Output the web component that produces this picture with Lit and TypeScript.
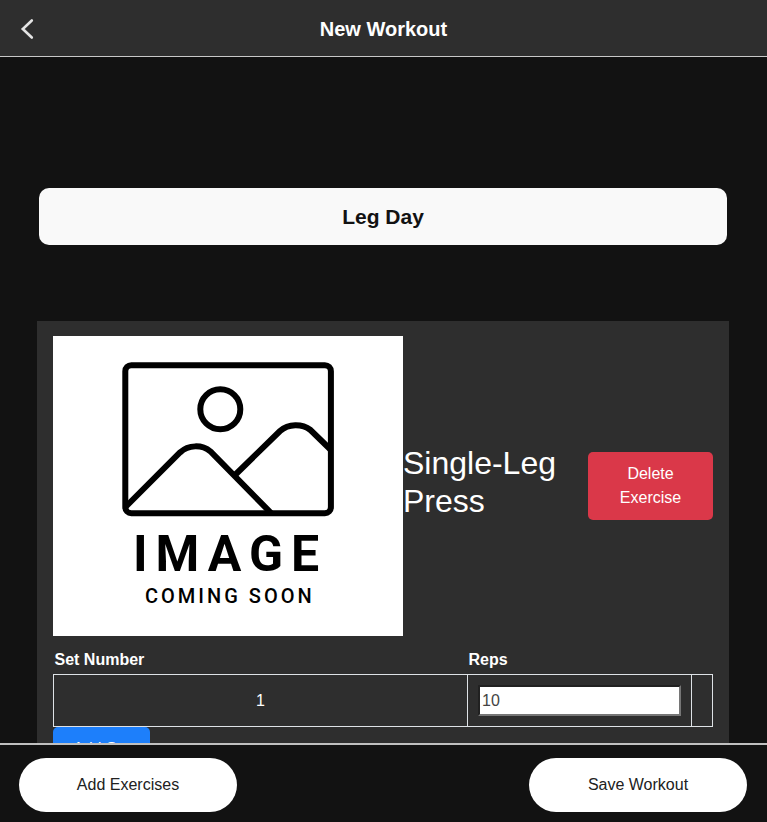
import { LitElement, html, css } from "lit";
import { customElement, state } from "lit/decorators.js";

interface WorkoutSet {
  reps: number;
}

@customElement("image-placeholder")
class ImagePlaceholder extends LitElement {
  static styles = css`
    :host {
      display: block;
      flex: none;
    }
    .art {
      display: block;
      background: #fff;
    }
    .line {
      fill: none;
      stroke: #000;
      stroke-width: 6;
    }
    .caption {
      font-family: Roboto, "Liberation Sans", sans-serif;
      font-weight: 700;
      fill: #000;
    }
    .large {
      font-size: 50px;
      letter-spacing: 8px;
    }
    .small {
      font-size: 20px;
      font-weight: 500;
      letter-spacing: 3px;
    }
  `;

  render() {
    return html`
      <svg class="art" width="350" height="300" viewBox="0 0 350 300" role="img" aria-label="Image coming soon">
        <rect class="line" x="72.3" y="29.2" width="205.6" height="148" rx="6" />
        <circle class="line" cx="167.3" cy="73.2" r="20" />
        <path class="line" d="M73 170.500 L127 116.500 C135.500 108.500 149 108.500 157.500 115.500 L218 177" />
        <path class="line" d="M182.500 138.500 L227 95 C235.500 87.500 249 87.500 257.500 94 L278 114" />
        <text class="caption large" x="80" y="235">IMAGE</text>
        <text class="caption small" x="92" y="267">COMING SOON</text>
      </svg>
    `;
  }
}

@customElement("exercise-card")
class ExerciseCard extends LitElement {
  @state() private sets: WorkoutSet[] = [{ reps: 10 }];

  static styles = css`
    :host {
      display: block;
      padding: 15px 16px;
      background: #2e2e2e;
    }
    .summary {
      display: flex;
      align-items: center;
    }
    .name {
      flex: 1;
      min-width: 0;
      margin: 0 0 8px;
      font-size: 32px;
      font-weight: 400;
      line-height: 38px;
    }
    .btn {
      border: 0;
      border-radius: 5px;
      color: #fff;
      font: inherit;
      line-height: 24px;
      cursor: pointer;
    }
    .delete {
      width: 125px;
      flex: none;
      padding: 10px 24px;
      background: #da3849;
    }
    .add {
      display: block;
      padding: 10px 20px;
      background: #1d7ffb;
    }
    .sets {
      width: 100%;
      margin-top: 11px;
      table-layout: fixed;
      border-collapse: collapse;
    }
    .sets th {
      padding: 1px 1px 2px;
      text-align: left;
      font-weight: 700;
    }
    .sets td {
      height: 31px;
      padding: 10px;
      border: 1px solid #dee2e6;
      text-align: center;
    }
    .reps-col {
      width: 224px;
    }
    .action-col {
      width: 21px;
    }
    .reps {
      display: block;
      box-sizing: border-box;
      width: 100%;
      height: 31px;
      padding: 1px 2px;
      border: 2px inset #767676;
      border-radius: 0;
      background: #fff;
      color: #444;
      font: inherit;
    }
  `;

  private addSet() {
    this.sets = [...this.sets, { reps: 10 }];
  }

  render() {
    return html`
      <div class="summary">
        <image-placeholder></image-placeholder>
        <h2 class="name">Single-Leg Press</h2>
        <button class="btn delete" type="button">Delete Exercise</button>
      </div>
      <table class="sets">
        <colgroup>
          <col />
          <col class="reps-col" />
          <col class="action-col" />
        </colgroup>
        <thead>
          <tr>
            <th scope="col">Set Number</th>
            <th scope="col" id="reps-label">Reps</th>
            <th></th>
          </tr>
        </thead>
        <tbody>
          ${this.sets.map(
            (set, i) => html`
              <tr>
                <td>${i + 1}</td>
                <td>
                  <input class="reps" type="text" inputmode="numeric" aria-labelledby="reps-label" .value=${String(set.reps)} />
                </td>
                <td></td>
              </tr>
            `
          )}
        </tbody>
      </table>
      <button class="btn add" type="button" @click=${this.addSet}>Add Set</button>
    `;
  }
}

@customElement("app-root")
class AppRoot extends LitElement {
  static styles = css`
    :host {
      display: flex;
      flex-direction: column;
      height: 100vh;
      background: #121212;
      color: #fff;
      font-family: "Liberation Sans", Arial, sans-serif;
      font-size: 16px;
      line-height: 24px;
    }
    .header {
      display: grid;
      grid-template-columns: 56px 1fr 56px;
      align-items: center;
      padding: 9px 0 7px;
      flex: none;
      background: #2e2e2e;
      border-bottom: 1px solid #c8c8c8;
    }
    .back {
      display: grid;
      place-items: center;
      height: 40px;
      padding: 0;
      border: 0;
      background: none;
      cursor: pointer;
    }
    .chevron {
      fill: none;
      stroke: #e4e4e4;
      stroke-width: 2.6;
      stroke-linecap: round;
    }
    .heading {
      margin: 0;
      font-size: 20px;
      font-weight: 700;
      text-align: center;
    }
    .content {
      flex: 1;
      min-height: 0;
      padding: 131px 38px 40px 37px;
      overflow-y: auto;
      scrollbar-width: none;
    }
    .title-row {
      display: flex;
      margin-bottom: 76px;
      padding: 0 2px;
    }
    .title {
      flex: 1;
      min-width: 0;
      box-sizing: border-box;
      height: 57px;
      padding: 0 16px;
      border: 0;
      border-radius: 10px;
      background: #f9f9f9;
      color: #121212;
      font: inherit;
      font-size: 21px;
      font-weight: 700;
      text-align: center;
    }
    .footer {
      display: flex;
      justify-content: space-between;
      flex: none;
      padding: 13px 20px 10px 19px;
      border-top: 2px solid #c0c0c0;
      background: #121212;
    }
    .pill {
      width: 218px;
      height: 54px;
      border: 0;
      border-radius: 27px;
      background: #fff;
      color: #212121;
      font: inherit;
      cursor: pointer;
    }
  `;

  render() {
    return html`
      <header class="header">
        <button class="back" type="button" aria-label="Back">
          <svg width="24" height="24" viewBox="0 0 24 24">
            <path class="chevron" d="M15.800 3.500 L6.800 12 L15.800 20.500" />
          </svg>
        </button>
        <h1 class="heading">New Workout</h1>
      </header>
      <main class="content">
        <div class="title-row">
          <input class="title" type="text" aria-label="Workout name" .value=${"Leg Day"} />
        </div>
        <exercise-card></exercise-card>
      </main>
      <footer class="footer">
        <button class="pill" type="button">Add Exercises</button>
        <button class="pill" type="button">Save Workout</button>
      </footer>
    `;
  }
}
